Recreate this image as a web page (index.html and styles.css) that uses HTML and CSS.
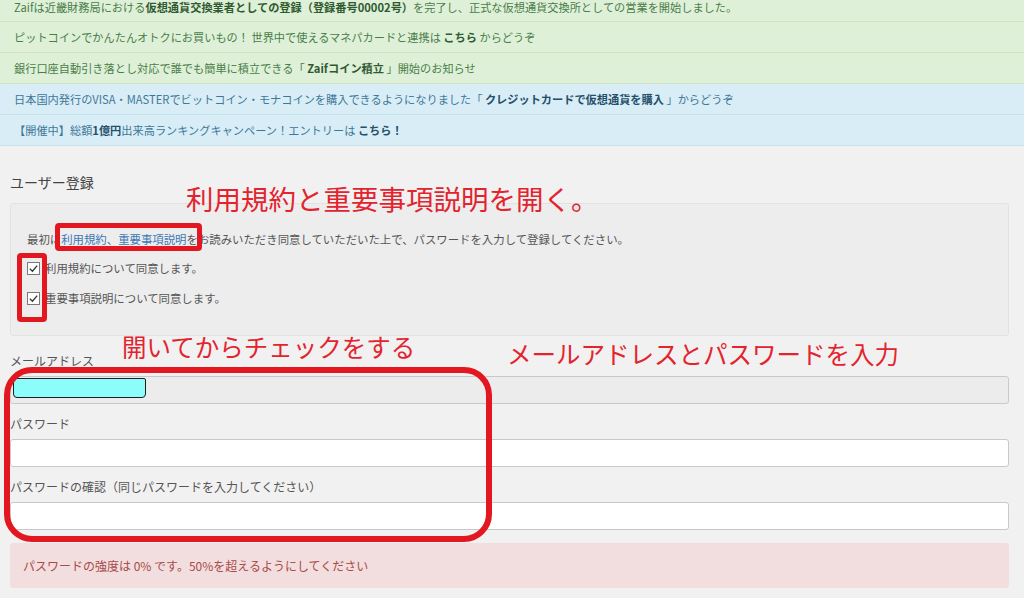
FILE: index.html
```html
<!DOCTYPE html>
<html lang="ja">
<head>
  <meta charset="UTF-8" />
  <meta name="viewport" content="width=device-width,initial-scale=1.0" />
  <title>ユーザー登録</title>
  <link rel="stylesheet" href="styles.css">
</head>
<body>
  <div class="page">
    <div class="notices">
      <div class="notice success">Zaifは近畿財務局における<b>仮想通貨交換業者としての登録（登録番号00002号）</b>を完了し、正式な仮想通貨交換所としての営業を開始しました。</div>
      <div class="notice success">ピットコインでかんたんオトクにお買いもの！ 世界中で使えるマネパカードと連携は <b>こちら</b> からどうぞ</div>
      <div class="notice success">銀行口座自動引き落とし対応で誰でも簡単に積立できる「 <b>Zaifコイン積立</b> 」開始のお知らせ</div>
      <div class="notice info">日本国内発行のVISA・MASTERでビットコイン・モナコインを購入できるようになりました「 <b>クレジットカードで仮想通貨を購入</b> 」からどうぞ</div>
      <div class="notice info">【開催中】総額<b>1億円</b>出来高ランキングキャンペーン！エントリーは <b>こちら！</b></div>
    </div>

    <div class="register">
      <h2>ユーザー登録</h2>

      <div class="agree-box">
        <p>最初に<a href="#">利用規約、重要事項説明</a>をお読みいただき同意していただいた上で、パスワードを入力して登録してください。</p>
        <label class="check">
          <span class="box"><svg viewBox="0 0 13 13" width="13" height="13"><polyline points="2.8,6.6 5.4,9.2 10.2,3.6" /></svg></span>
          利用規約について同意します。
        </label>
        <label class="check">
          <span class="box"><svg viewBox="0 0 13 13" width="13" height="13"><polyline points="2.8,6.6 5.4,9.2 10.2,3.6" /></svg></span>
          重要事項説明について同意します。
        </label>
      </div>

      <div class="field">
        <label>メールアドレス</label>
        <div class="input-wrap">
          <input type="text" class="input" readonly />
          <span class="redact"></span>
        </div>
      </div>
      <div class="field">
        <label>パスワード</label>
        <input type="password" class="input white" />
      </div>
      <div class="field">
        <label>パスワードの確認（同じパスワードを入力してください）</label>
        <input type="password" class="input white" />
      </div>

      <div class="alert">パスワードの強度は 0% です。50%を超えるようにしてください</div>
    </div>

    <!-- annotations drawn over the screenshot -->
    <div class="note note-open">利用規約と重要事項説明を開く。</div>
    <div class="note note-check">開いてからチェックをする</div>
    <div class="note note-input">メールアドレスとパスワードを入力</div>
    <div class="mark mark-link"></div>
    <div class="mark mark-checks"></div>
    <div class="mark mark-fields"></div>
  </div>
</body>
</html>
```

FILE: styles.css
```css
body {
  margin: 0;
  background-color: #f1f1f1;
  font-family: "Noto Sans CJK JP", "Noto Sans", sans-serif;
  color: #555;
}
.page {
  position: relative;
  overflow: hidden;
  min-height: 100vh;
}

.notice {
  padding: 8px 14px 7px;
  line-height: 15px;
  font-size: 11.2px;
  border-bottom: 1px solid;
  white-space: nowrap;
}
/* top row is scrolled partly out of view */
.notice:first-child { padding-top: 0; padding-bottom: 6px; }
.notice b { font-weight: bold; }
.notice.success {
  background-color: #dff0d8;
  border-color: #cfe3c4;
  color: #4a7d4a;
}
.notice.success b { color: #2f5a30; }
.notice.info {
  background-color: #d9edf7;
  border-color: #c3e3ef;
  color: #3d7898;
}
.notice.info b { color: #24506a; }

.register {
  padding: 26px 15px 0 10px;
}
.register h2 {
  margin: 0 0 11px;
  font-size: 14px;
  line-height: 20px;
  font-weight: normal;
  color: #444;
}

.agree-box {
  background-color: #ededed;
  border: 1px solid #e2e2e2;
  border-radius: 3px;
  padding: 25px 16px 27px;
  font-size: 11.4px;
}
.agree-box p {
  margin: 0 0 9px;
  line-height: 20px;
}
.agree-box a {
  color: #3b78b8;
  text-decoration: none;
}
.check {
  display: flex;
  align-items: center;
  gap: 5px;
  height: 20px;
  margin-bottom: 10px;
}
.check:last-child { margin-bottom: 0; }
.check .box {
  width: 13px;
  height: 13px;
  box-sizing: border-box;
  border: 1px solid #7a7a7a;
  background-color: #fff;
  display: flex;
}
.check .box svg {
  margin: -1px;
  fill: none;
  stroke: #333;
  stroke-width: 1.3;
}

.field { margin-top: 16px; }
.field + .field { margin-top: 11px; }
.field label {
  display: block;
  font-size: 12px;
  line-height: 18px;
  margin-bottom: 6px;
  color: #555;
}
.input-wrap { position: relative; }
.input {
  display: block;
  width: 100%;
  height: 28px;
  box-sizing: border-box;
  border: 1px solid #c9c9c9;
  border-radius: 3px;
  background-color: #ececec;
  margin: 0;
  padding: 4px 8px;
  font: inherit;
}
.input.white { background-color: #fff; }
.redact {
  position: absolute;
  left: 3px;
  top: 2px;
  width: 133px;
  height: 20px;
  box-sizing: border-box;
  background-color: #8cfdfb;
  border: 1px solid #1e1e1e;
  border-radius: 2px 2px 4px 4px;
}

.alert {
  margin-top: 13px;
  background-color: #f2dede;
  border-radius: 3px;
  padding: 14px 13px;
  line-height: 17px;
  font-size: 12px;
  color: #a94a4a;
}

.note {
  position: absolute;
  color: #e3242f;
  line-height: 1;
  white-space: nowrap;
}
.note-open { left: 186px; top: 185px; font-size: 27.5px; }
.note-check { left: 122px; top: 335px; font-size: 24.5px; }
.note-input { left: 507px; top: 342px; font-size: 24.5px; }

.mark {
  position: absolute;
  box-sizing: border-box;
  border: 5px solid #e3171f;
  border-radius: 4px;
}
.mark-link { left: 55px; top: 223px; width: 147px; height: 28px; }
.mark-checks { left: 17px; top: 253px; width: 30px; height: 69px; }
.mark-fields {
  left: 4px; top: 367px; width: 488px; height: 175px;
  border-width: 6px;
  border-radius: 28px;
}
```
